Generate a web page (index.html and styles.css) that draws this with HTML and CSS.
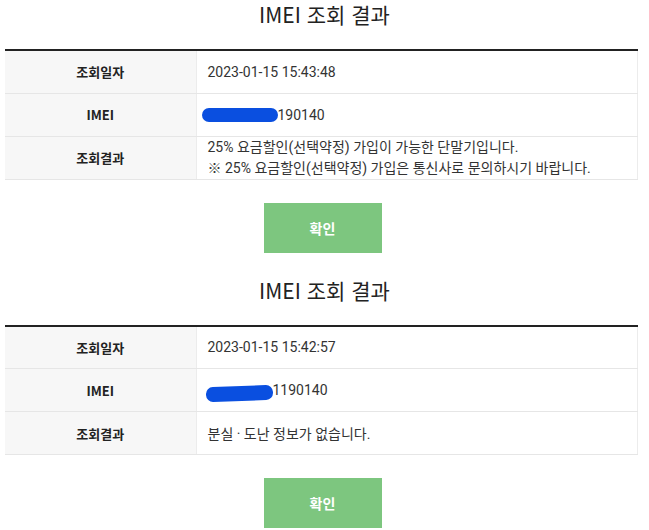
FILE: index.html
```html
<!DOCTYPE html>
<html lang="ko">
<head>
<meta charset="utf-8">
<link rel="stylesheet" href="styles.css">
</head>
<body>
<div class="page">
  <section class="result">
    <h2 class="title">IMEI 조회 결과</h2>
    <table class="info">
      <tr><th>조회일자</th><td>2023-01-15 15:43:48</td></tr>
      <tr><th>IMEI</th><td><span class="mask mask-a"></span>190140</td></tr>
      <tr><th>조회결과</th><td class="multi">25% 요금할인(선택약정) 가입이 가능한 단말기입니다.<br>※ 25% 요금할인(선택약정) 가입은 통신사로 문의하시기 바랍니다.</td></tr>
    </table>
    <div class="actions"><button class="ok">확인</button></div>
  </section>
  <section class="result">
    <h2 class="title">IMEI 조회 결과</h2>
    <table class="info">
      <tr><th>조회일자</th><td>2023-01-15 15:42:57</td></tr>
      <tr><th>IMEI</th><td><span class="mask mask-b"></span>1190140</td></tr>
      <tr><th>조회결과</th><td>분실 · 도난 정보가 없습니다.</td></tr>
    </table>
    <div class="actions"><button class="ok">확인</button></div>
  </section>
</div>
</body>
</html>
```
FILE: styles.css
```css
* { box-sizing: border-box; }
html, body { margin: 0; padding: 0; background: #fff; }
body {
  font-family: "Noto Sans CJK KR", "Noto Sans", sans-serif;
  color: #333;
  width: 649px;
}
.page { padding-top: 1px; }
.result { padding-bottom: 24px; }
.title {
  margin: 0 0 22px;
  font-size: 21px;
  line-height: 26px;
  font-weight: 400;
  text-align: center;
  color: #222;
}
.info {
  margin: 0 11px 0 5px;
  width: 633px;
  border-collapse: collapse;
  border-top: 2px solid #222;
  font-size: 13px;
}
.info th, .info td {
  height: 43px;
  border-bottom: 1px solid #e6e6e6;
  padding: 0;
  vertical-align: middle;
}
.info th {
  width: 191px;
  background: #f7f7f7;
  font-weight: 700;
  color: #222;
  text-align: center;
  border-right: 1px solid #ececec;
}
.info td {
  padding-left: 11px;
  font-family: Roboto, "Noto Sans CJK KR", sans-serif;
  font-size: 14px;
  color: #333;
  text-align: left;
  border-right: 1px solid #ececec;
}
.info td.multi { line-height: 21px; }
.mask {
  display: inline-block;
  vertical-align: middle;
  height: 14px;
  background: #0a4fe0;
  border-radius: 7px;
  margin-top: -2px;
}
.mask-a { width: 76px; margin-left: -6px; }
.mask-b { width: 67px; margin-left: -2px; transform: translateY(3px) rotate(-2deg); height: 15px; }
.actions {
  display: flex;
  justify-content: center;
  margin-top: 23px;
  padding-right: 4px;
}
.ok {
  width: 118px;
  height: 50px;
  border: none;
  background: #7dc67f;
  color: #fff;
  font-family: "Noto Sans CJK KR", "Noto Sans", sans-serif;
  font-size: 14px;
  font-weight: 700;
  padding: 0;
}
```
